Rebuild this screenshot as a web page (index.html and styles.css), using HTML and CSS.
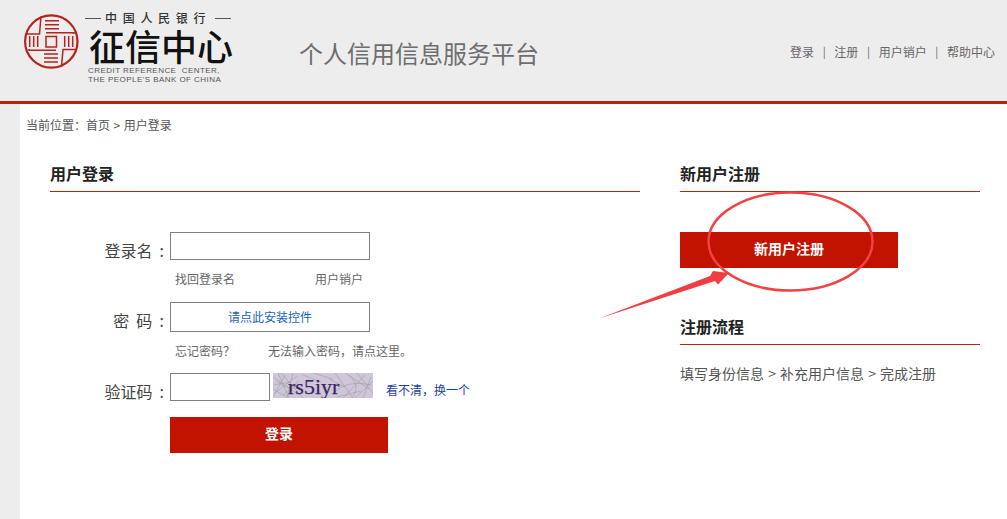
FILE: index.html
```html
<!DOCTYPE html>
<html lang="zh-CN">
<head>
<meta charset="utf-8">
<title>个人信用信息服务平台</title>
<link rel="stylesheet" href="styles.css">
</head>
<body>
<header class="site-header">
  <div class="logo">
    <svg class="seal" viewBox="0 0 56 56" aria-hidden="true">
      <circle cx="28.300" cy="27.500" r="26.200" fill="none" stroke="#b5231d" stroke-width="2.200"/>
      <g fill="none" stroke="#b5231d" stroke-width="1.500">
        <rect x="23" y="22.500" width="10.500" height="10.500"/>
        <path d="M18 2.500L16.500 20H2.500M38.500 52.500L40 35.500H54"/>
        <path d="M22 6.700h14M22 10.700h14M22 14.700h14M23 18.700h28V20"/>
        <path d="M21 40h14M21 44h14M21 48h14M33 36.300H6V35"/>
        <path d="M6.700 22v11M10.700 22v11M14.700 22v11"/>
        <path d="M41.700 22v11M45.700 22v11M49.700 22v11"/>
      </g>
    </svg>
    <div class="logo-text">
      <div class="logo-bank"><span class="logo-rule"></span>中国人民银行<span class="logo-rule"></span></div>
      <div class="logo-name">征信中心</div>
      <div class="logo-en">CREDIT REFERENCE&nbsp; CENTER,<br>THE PEOPLE'S BANK OF CHINA</div>
    </div>
  </div>
  <div class="site-title">个人信用信息服务平台</div>
  <nav class="top-nav">
    <a>登录</a><span class="sep">|</span><a>注册</a><span class="sep">|</span><a>用户销户</a><span class="sep">|</span><a>帮助中心</a>
  </nav>
</header>

<div class="page">
  <main class="content">
    <div class="crumbs">当前位置<span class="colon">：</span>首页 &gt; 用户登录</div>
    <div class="columns">
      <section class="login">
        <h2 class="section-title">用户登录</h2>
        <div class="form">
          <div class="row">
            <label class="label">登录名&nbsp;&nbsp;:</label>
            <div class="field field-name"></div>
          </div>
          <div class="hints hints-name"><a class="hint-a">找回登录名</a><a>用户销户</a></div>
          <div class="row">
            <label class="label">密&nbsp;&nbsp;码&nbsp;&nbsp;:</label>
            <div class="field field-pass"><a>请点此安装控件</a></div>
          </div>
          <div class="hints hints-pass"><a class="hint-b">忘记密码？</a><a>无法输入密码，请点这里。</a></div>
          <div class="row row-captcha">
            <label class="label">验证码&nbsp;&nbsp;:</label>
            <div class="field field-code"></div>
            <svg class="captcha" viewBox="0 0 100 25" aria-hidden="true">
              <rect width="100" height="25" fill="#cfc6da"/>
              <g fill="none" stroke="#a39da3" stroke-width=".6">
                <path d="M0 4L26 22M2 20L24 3M8 0L30 25M14 25L20 0M62 0L80 25M70 25L92 2M84 0L100 20M90 25L98 4M56 6L72 14M0 12L18 9"/>
                <path d="M60 20Q75 6 98 12M4 8Q14 18 28 14M76 2Q88 12 80 24M0 24L12 2M5 0L16 25M10 22L26 8M0 16L14 24M30 2L48 9M40 0L60 6M64 24L88 18M72 0L96 16M82 25L100 8"/>
              </g>
              <text class="captcha-text" x="15" y="21">rs5iyr</text>
            </svg>
            <a class="refresh">看不清，换一个</a>
          </div>
          <button class="btn btn-login" type="button">登录</button>
        </div>
      </section>
      <aside class="register">
        <h2 class="section-title">新用户注册</h2>
        <button class="btn btn-register" type="button">新用户注册</button>
        <h2 class="section-title">注册流程</h2>
        <p class="steps">填写身份信息 &gt; 补充用户信息 &gt; 完成注册</p>
      </aside>
    </div>
  </main>
</div>

<svg class="annotation" viewBox="0 0 1007 519" aria-hidden="true">
  <ellipse cx="790.500" cy="241.500" rx="82" ry="49" fill="none" stroke="#ef4444" stroke-width="2.500"/>
  <path d="M599 318.500L710 276L713 271L729 273L718 284.500L715 281Z" fill="#f03e42"/>
</svg>
</body>
</html>
```
FILE: styles.css
```css
* { box-sizing: border-box; }
html, body { margin: 0; padding: 0; }
body {
  width: 1007px;
  height: 519px;
  overflow: hidden;
  position: relative;
  background: #fff;
  font-family: "Noto Sans CJK SC", "Liberation Sans", sans-serif;
  font-size: 12px;
  color: #555;
}
a { color: inherit; text-decoration: none; }

.site-header {
  height: 104px;
  background: #eeedee;
  border-bottom: 3px solid #b8220c;
  display: flex;
  align-items: flex-start;
  padding-left: 23px;
}
.logo { display: flex; align-items: flex-start; width: 276px; flex: none; }
.seal { width: 56px; height: 56px; margin-top: 14px; flex: none; }
.logo-text { margin-left: 6px; padding-top: 11px; width: 155px; }
.logo-bank {
  display: flex;
  align-items: center;
  gap: 4px;
  height: 14px;
  font-size: 12px;
  line-height: 14px;
  letter-spacing: 5.700px;
  color: #333;
  font-weight: 500;
  white-space: nowrap;
}
.logo-rule { width: 16px; height: 1px; background: #555; flex: none; }
.logo-name {
  margin: 3px 0 0 4px;
  height: 34px;
  font-size: 36px;
  line-height: 34px;
  font-weight: 500;
  color: #111;
  white-space: nowrap;
}
.logo-en {
  margin: 5px 0 0 3px;
  font-family: "Liberation Sans", sans-serif;
  font-size: 8px;
  line-height: 8.500px;
  letter-spacing: .45px;
  color: #555;
  white-space: nowrap;
}
.site-title {
  margin-top: 36px;
  font-size: 24px;
  line-height: 34px;
  color: #6e6e6e;
  white-space: nowrap;
}
.top-nav {
  margin-left: auto;
  margin-top: 43px;
  padding-right: 12px;
  display: flex;
  font-size: 12px;
  line-height: 17px;
  color: #666;
  white-space: nowrap;
}
.sep { width: 8px; text-align: center; margin: 0 6.170px; font-size: 11px; }

.page { height: 415px; padding-left: 20px; background: #eeedee; }
.content { height: 100%; background: #fff; padding: 12px 27px 0 6px; }
.crumbs { line-height: 18px; color: #555; word-spacing: .9px; }
.colon { font-family: "Noto Sans CJK TC", sans-serif; }
.columns { display: flex; padding: 29px 0 0 24px; gap: 40px; }
.login { width: 590px; flex: none; }
.register { width: 300px; flex: none; }
.section-title {
  margin: 0;
  height: 29px;
  font-size: 16px;
  line-height: 20px;
  font-weight: 700;
  color: #222;
  border-bottom: 1px solid #b3290f;
}
.form { padding-top: 40px; }
.row { display: flex; align-items: flex-start; }
.label {
  width: 120px;
  flex: none;
  text-align: right;
  font-size: 16px;
  line-height: 22px;
  margin-top: 7px;
  color: #444;
  padding-right: 6px;
}
.field {
  border: 1px solid #808080;
  background: #fff;
  height: 28px;
}
.field-name { width: 200px; }
.field-pass {
  width: 200px;
  height: 30px;
  text-align: center;
  line-height: 28px;
  color: #1a62b8;
}
.field-code { width: 100px; }
.hints {
  display: flex;
  height: 41px;
  padding: 9px 0 0 125px;
  line-height: 18px;
  color: #666;
}
.hints-pass { height: 41px; padding-top: 10px; }
.hint-a { width: 140px; }
.hint-b { width: 93px; }
.captcha { width: 100px; height: 25px; margin-left: 3px; flex: none; }
.captcha-text {
  font-family: "Liberation Serif", serif;
  font-size: 22px;
  fill: #3a2760;
  stroke: #3a2760;
  stroke-width: .25;
}
.refresh { margin: 8px 0 0 13px; color: #1f3f9e; line-height: 18px; }
.btn {
  display: block;
  width: 218px;
  height: 36px;
  border: 0;
  padding: 0 0 4px;
  background: #c21200;
  color: #fff;
  font: 700 14px/32px "Noto Sans CJK SC", sans-serif;
}
.btn-login { margin: 15px 0 0 120px; }
.btn-register { margin: 40px 0 48px; }
.steps { margin: 19px 0 0; line-height: 18px; font-size: 14px; color: #555; word-spacing: 1px; }

.annotation {
  position: absolute;
  left: 0;
  top: 0;
  width: 1007px;
  height: 519px;
  pointer-events: none;
}
```
